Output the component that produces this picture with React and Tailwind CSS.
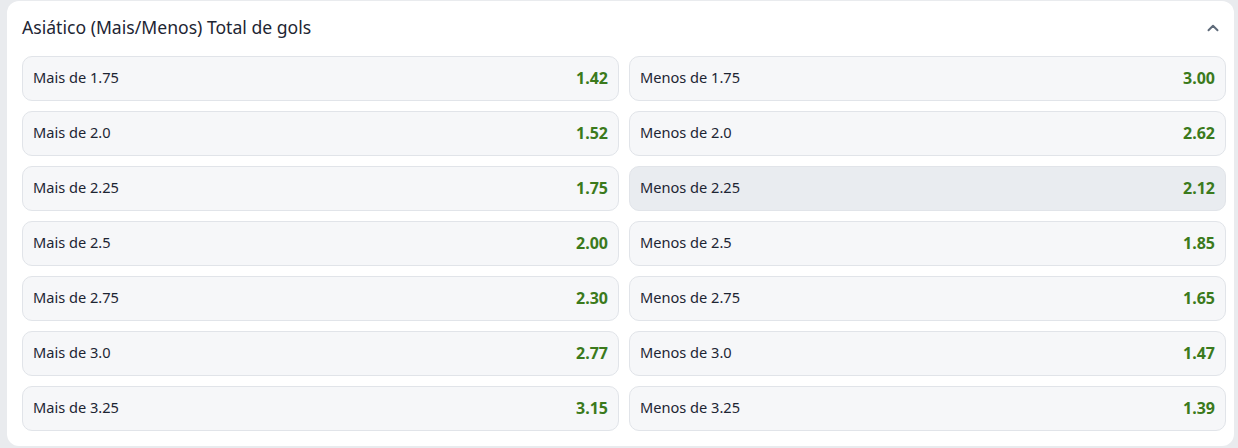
import React from 'react'

const rows = [
    ['Mais de 1.75', '1.42', 'Menos de 1.75', '3.00'],
    ['Mais de 2.0', '1.52', 'Menos de 2.0', '2.62'],
    ['Mais de 2.25', '1.75', 'Menos de 2.25', '2.12'],
    ['Mais de 2.5', '2.00', 'Menos de 2.5', '1.85'],
    ['Mais de 2.75', '2.30', 'Menos de 2.75', '1.65'],
    ['Mais de 3.0', '2.77', 'Menos de 3.0', '1.47'],
    ['Mais de 3.25', '3.15', 'Menos de 3.25', '1.39'],
]

function OddButton({ label, odd, active = false }) {
    return (
        <div
            className={`flex items-center justify-between h-[45px] pl-[10px] pr-[10px] pb-[2px] rounded-[10px] border border-[#e1e4e9] cursor-pointer
                ${active ? 'bg-[#e9ecf0]' : 'bg-[#f6f7f9]'}`}
        >
            <span className="text-[14.6px] text-[#1d2533]">{label}</span>
            <span className="text-[16px] font-bold text-[#3b7a1c]">{odd}</span>
        </div>
    )
}

export default function App() {
    return (
        <div className="w-[1238px] h-[448px] bg-[#e9ebee] pl-[7px] pr-[4px] pt-[1px]" style={{ fontFamily: '"Noto Sans", "Open Sans", sans-serif' }}>
            <div className="bg-white rounded-[12px] pl-[15px] pr-[8px] pb-[15px]">
                <div className="flex items-center justify-between h-[55px] pr-[4px] pb-[2px]">
                    <h3 className="text-[17.6px] text-[#1d2533]">Asiático (Mais/Menos) Total de gols</h3>
                    <svg viewBox="0 0 24 24" fill="none" stroke="#5f6b7a" strokeWidth={2.6} strokeLinecap="round" strokeLinejoin="round" className="w-[18px] h-[18px]">
                        <path d="M6 15l6-6 6 6" />
                    </svg>
                </div>

                <div className="grid grid-cols-2 gap-x-[10px] gap-y-[10px]">
                    {rows.map((r, i) => (
                        <React.Fragment key={i}>
                            <OddButton label={r[0]} odd={r[1]} />
                            <OddButton label={r[2]} odd={r[3]} active={i === 2} />
                        </React.Fragment>
                    ))}
                </div>
            </div>
        </div>
    )
}
